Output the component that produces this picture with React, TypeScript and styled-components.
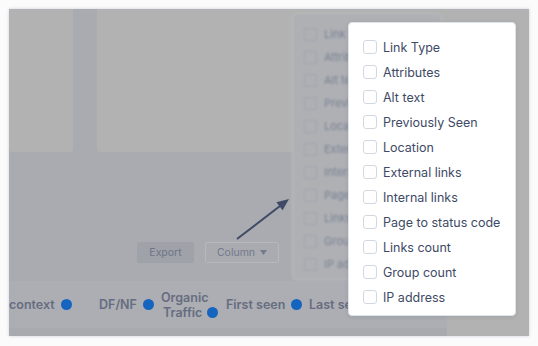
import React from "react";
import styled, { createGlobalStyle } from "styled-components";

const Global = createGlobalStyle`
  html, body { margin: 0; padding: 0; background: #ffffff; }
  body { font-family: "Inter", "Liberation Sans", sans-serif; }
`;

const Page = styled.div`
  width: 538px;
  height: 346px;
  padding: 9px;
  box-sizing: border-box;
  background: #fbfbfc;
`;

const Frame = styled.div`
  position: relative;
  width: 520px;
  height: 327px;
  background: #a9abb0;
  box-shadow: 0 0 3px rgba(120, 130, 160, 0.35);
  overflow: hidden;
  display: grid;
  grid-template-columns: 1fr 82px;
`;

const Main = styled.div`
  display: flex;
  flex-direction: column;
`;

const TopRow = styled.div`
  height: 143px;
  display: flex;
  gap: 24px;
`;

const Panel = styled.div<{ $w?: number }>`
  background: #b2b2b2;
  border-radius: 0 0 3px 3px;
  ${(p) => (p.$w ? `width: ${p.$w}px;` : "flex: 1;")}
`;

const Toolbar = styled.div`
  height: 129px;
  display: flex;
  align-items: flex-end;
  gap: 11px;
  padding: 0 0 18px 128px;
  box-sizing: border-box;
`;

const ExportBtn = styled.div`
  width: 57px;
  height: 21px;
  background: #9fa2a9;
  border-radius: 2px;
  display: flex;
  align-items: center;
  justify-content: center;
  font-size: 10.5px;
  color: #6f7588;
`;

const ColumnBtn = styled.div`
  width: 74px;
  height: 21px;
  box-sizing: border-box;
  border: 1px solid #b6b8bd;
  border-radius: 2px;
  display: flex;
  align-items: center;
  justify-content: center;
  gap: 5px;
  font-size: 10.5px;
  color: #737a8c;
`;

const HeaderBand = styled.div`
  height: 47px;
  background: #acaeb3;
  display: flex;
  align-items: center;
  border-bottom: 8px solid #a8aaaf;
`;

const HeadCell = styled.div<{ $w: number }>`
  width: ${(p) => p.$w}px;
  flex-shrink: 0;
  display: flex;
  align-items: center;
  gap: 6px;
  font-size: 12.5px;
  font-weight: 600;
  color: #666d80;
  line-height: 15px;
  white-space: nowrap;
`;

const Stack = styled.div`
  display: flex;
  flex-direction: column;
`;

const IndentLine = styled.div`
  display: flex;
  align-items: center;
  gap: 5px;
  padding-left: 2px;
`;

const Dot = styled.span`
  width: 11px;
  height: 11px;
  border-radius: 50%;
  background: #1565c0;
  flex-shrink: 0;
`;

const SidePanel = styled.div`
  background: #b2b2b2;
`;

const GhostMenu = styled.div`
  position: absolute;
  left: 283px;
  top: 4px;
  width: 150px;
  height: 267px;
  box-sizing: border-box;
  background: #aeb0b4;
  border: 1px solid #bbbdc2;
  border-radius: 4px;
  padding: 14px 0 0 11px;
  display: flex;
  flex-direction: column;
  gap: 11px;
  filter: blur(0.8px);
`;

const GhostItem = styled.div`
  display: flex;
  align-items: center;
  gap: 7px;
  height: 12px;
  font-size: 11px;
  color: #7a8193;
  white-space: nowrap;
`;

const GhostBox = styled.span`
  width: 11px;
  height: 11px;
  border: 1px solid #9ea3ad;
  border-radius: 2px;
`;

const Menu = styled.div`
  position: absolute;
  left: 339px;
  top: 13px;
  width: 168px;
  height: 294px;
  box-sizing: border-box;
  background: #ffffff;
  border: 1px solid #dfe3ea;
  border-radius: 4px;
  box-shadow: 0 1px 4px rgba(40, 50, 80, 0.12);
  padding: 17px 0 0 14px;
  display: flex;
  flex-direction: column;
  gap: 11px;
`;

const Item = styled.label`
  display: flex;
  align-items: center;
  gap: 6px;
  height: 14px;
  font-size: 12.5px;
  color: #3e4a65;
  white-space: nowrap;
`;

const Box = styled.span`
  width: 14px;
  height: 14px;
  box-sizing: border-box;
  border: 1px solid #d3d8e0;
  border-radius: 3px;
  background: #fff;
`;

const Arrow = styled.svg`
  position: absolute;
  left: 225px;
  top: 185px;
`;

const items = [
  "Link Type",
  "Attributes",
  "Alt text",
  "Previously Seen",
  "Location",
  "External links",
  "Internal links",
  "Page to status code",
  "Links count",
  "Group count",
  "IP address",
];

export default function App() {
  return (
    <>
      <Global />
      <Page>
        <Frame>
          <Main>
            <TopRow>
              <Panel $w={64} />
              <Panel />
            </TopRow>
            <Toolbar>
              <ExportBtn>Export</ExportBtn>
              <ColumnBtn>
                Column
                <svg width="7" height="5" viewBox="0 0 7 5">
                  <path d="M0 0h7L3.5 5z" fill="#737a8c" />
                </svg>
              </ColumnBtn>
            </Toolbar>
            <HeaderBand>
              <HeadCell $w={90}>
                context <Dot />
              </HeadCell>
              <HeadCell $w={62}>
                DF/NF <Dot />
              </HeadCell>
              <HeadCell $w={65}>
                <Stack>
                  <span>Organic</span>
                  <IndentLine>
                    Traffic <Dot />
                  </IndentLine>
                </Stack>
              </HeadCell>
              <HeadCell $w={83}>
                First seen <Dot />
              </HeadCell>
              <HeadCell $w={80}>Last seen</HeadCell>
            </HeaderBand>
          </Main>
          <SidePanel />
          <Arrow width="70" height="60" viewBox="0 0 70 60">
            <line x1="3" y1="45" x2="46" y2="12" stroke="#3f4b66" strokeWidth="2" />
            <path d="M55 5 L42.4 8.3 L48.6 16.3 Z" fill="#3f4b66" />
          </Arrow>
          <GhostMenu>
            {items.map((t) => (
              <GhostItem key={t}>
                <GhostBox />
                {t}
              </GhostItem>
            ))}
          </GhostMenu>
          <Menu>
            {items.map((t) => (
              <Item key={t}>
                <Box />
                {t}
              </Item>
            ))}
          </Menu>
        </Frame>
      </Page>
    </>
  );
}
